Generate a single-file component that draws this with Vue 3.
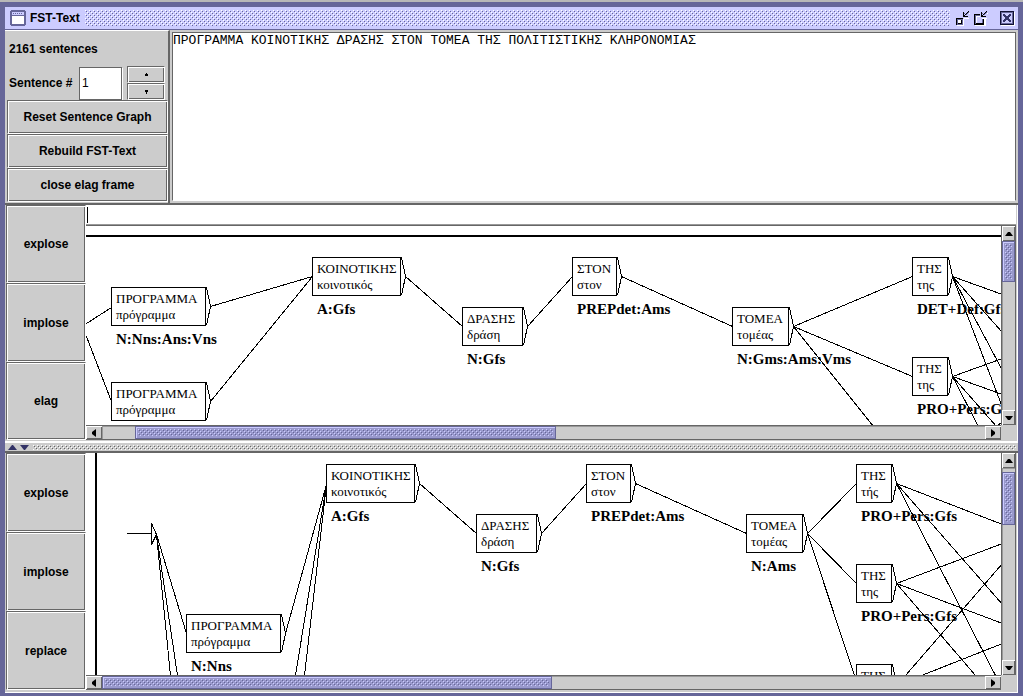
<script setup>
import { ref } from 'vue'

const sentence = ref('ΠΡΟΓΡΑΜΜΑ ΚΟΙΝΟΤΙΚΗΣ ΔΡΑΣΗΣ ΣΤΟΝ ΤΟΜΕΑ ΤΗΣ ΠΟΛΙΤΙΣΤΙΚΗΣ ΚΛΗΡΟΝΟΜΙΑΣ')
const sentenceNumber = ref('1')
const formula = ref('')

// Each node: [x, y, box width, inflected form, lemma, tags]
// Each edge: [x1, y1, x2, y2]
const panes = [
  {
    id: 'source',
    actions: ['explose', 'implose', 'elag'],
    rule: [0, 10, 4000, 10],
    hThumb: [33, 421, 429],
    vThumb: [0, 41, 127],
    nodes: [
      [25, 61, 94, 'ΠΡΟΓΡΑΜΜΑ', 'πρόγραμμα', 'N:Nns:Ans:Vns'],
      [25, 156, 94, 'ΠΡΟΓΡΑΜΜΑ', 'πρόγραμμα', ''],
      [226, 31, 88, 'ΚΟΙΝΟΤΙΚΗΣ', 'κοινοτικός', 'A:Gfs'],
      [376, 81, 60, 'ΔΡΑΣΗΣ', 'δράση', 'N:Gfs'],
      [486, 31, 44, 'ΣΤΟΝ', 'στον', 'PREPdet:Ams'],
      [646, 81, 56, 'ΤΟΜΕΑ', 'τομέας', 'N:Gms:Ams:Vms'],
      [826, 31, 35, 'ΤΗΣ', 'της', 'DET+Def:Gfs'],
      [826, 131, 35, 'ΤΗΣ', 'της', 'PRO+Pers:Gfs'],
    ],
    edges: [
      [0, 97, 25, 81], [0, 110, 25, 175],
      [124, 80, 226, 50], [124, 175, 226, 50],
      [319, 50, 376, 100], [441, 100, 486, 50], [535, 50, 646, 100],
      [707, 100, 826, 50], [707, 100, 826, 150], [707, 100, 787, 200],
      [866, 50, 916, 68], [866, 50, 916, 106], [866, 50, 916, 144], [866, 50, 916, 181],
      [866, 150, 916, 132], [866, 150, 916, 168], [866, 150, 910, 200], [866, 150, 892, 200],
      [910, 200, 916, 195],
    ],
  },
  {
    id: 'result',
    actions: ['explose', 'implose', 'replace'],
    rule: [10, 0, 10, 4000],
    hThumb: [0, 450, 433],
    vThumb: [4, 52, 134],
    start: true,
    nodes: [
      [100, 161, 94, 'ΠΡΟΓΡΑΜΜΑ', 'πρόγραμμα', 'N:Nns'],
      [240, 11, 88, 'ΚΟΙΝΟΤΙΚΗΣ', 'κοινοτικός', 'A:Gfs'],
      [390, 61, 60, 'ΔΡΑΣΗΣ', 'δράση', 'N:Gfs'],
      [500, 11, 44, 'ΣΤΟΝ', 'στον', 'PREPdet:Ams'],
      [660, 61, 56, 'ΤΟΜΕΑ', 'τομέας', 'N:Ams'],
      [770, 11, 35, 'ΤΗΣ', 'τής', 'PRO+Pers:Gfs'],
      [770, 111, 35, 'ΤΗΣ', 'της', 'PRO+Pers:Gfs'],
      [770, 211, 35, 'ΤΗΣ', 'της', ''],
    ],
    edges: [
      [70, 81, 100, 180], [70, 81, 91, 222], [70, 81, 84, 222],
      [199, 180, 240, 31], [209, 222, 240, 31], [218, 222, 240, 31],
      [333, 30, 390, 80], [455, 80, 500, 30], [549, 30, 660, 80],
      [721, 80, 770, 30], [721, 80, 770, 130], [721, 80, 768, 222],
      [810, 30, 916, 71], [810, 30, 916, 151], [810, 30, 909, 222],
      [810, 130, 916, 90], [810, 130, 916, 170], [810, 130, 889, 222],
      [819, 222, 916, 110], [835, 222, 916, 190],
    ],
  },
]

const tracks = (parts) => parts.map((n) => `${n}fr`).join(' ')
const chevron = ([x, y, w]) => `M${x + w + 1} ${y} L${x + w + 5} ${y + 19} L${x + w + 1} ${y + 38}`
</script>

<template>
  <main class="frame">
    <svg class="defs" aria-hidden="true">
      <defs>
        <pattern id="bumps-title" width="4" height="4" patternUnits="userSpaceOnUse">
          <path d="M0 0h1v1H0zM2 2h1v1H2z" fill="#fff" />
          <path d="M1 1h1v1H1zM3 3h1v1H3z" fill="#666699" />
        </pattern>
        <pattern id="bumps-thumb" width="4" height="4" patternUnits="userSpaceOnUse">
          <path d="M0 0h1v1H0zM2 2h1v1H2z" fill="#ccccff" />
          <path d="M1 1h1v1H1zM3 3h1v1H3z" fill="#666699" />
        </pattern>
        <pattern id="bumps-split" width="4" height="4" patternUnits="userSpaceOnUse">
          <path d="M0 0h1v1H0zM2 2h1v1H2z" fill="#fff" />
          <path d="M1 1h1v1H1zM3 3h1v1H3z" fill="#666" />
        </pattern>
      </defs>
    </svg>

    <header class="titlebar">
      <svg class="app-icon" width="16" height="16" shape-rendering="crispEdges" aria-hidden="true">
        <path d="M1 0h14v1h1v14h-1v1H1v-1H0V1h1z" fill="#666699" />
        <path d="M2 6h12v8H2z" fill="#fff" />
        <path d="M2 2h12v3H2z" fill="#ccccff" />
        <path d="M3 3h1v1H3zM5 3h1v1H5zM7 3h1v1H7zM9 3h1v1H9zM11 3h1v1h-1z" fill="#666699" />
      </svg>
      <h1>FST-Text</h1>
      <svg class="bumps" aria-hidden="true"><rect width="100%" height="100%" fill="url(#bumps-title)" /></svg>
      <div class="win-buttons">
        <button type="button" aria-label="Minimize">
          <svg width="15" height="15" shape-rendering="crispEdges">
            <path d="M1 8h7v7H1z" fill="#fff" />
            <path d="M0 7h7v7H0z" fill="#666699" />
            <path d="M0 7h7v1H1v6H0zM5 9h1v4H2v-1h3z" fill="#000" />
            <path d="M2 9h3v3H2z" fill="#fff" />
            <path d="M8 7h5v1H8zM13 2h1v1h-1z" fill="#fff" />
            <path d="M7 1h1v3h1V3h1V2h1V1h1V0h1v1h-1v1h-1v1h-1v1h-1v1h3v1H7z" fill="#000" />
            <path d="M8 2h1v1H8zM12 1h1v1h-1zM11 2h1v1h-1zM10 3h1v1h-1z" fill="#666699" />
          </svg>
        </button>
        <button type="button" aria-label="Restore">
          <svg width="15" height="15" shape-rendering="crispEdges">
            <path d="M1 4h5v2H3v7h7V8h2v7H1z" fill="#fff" />
            <path d="M0 3h6v2H2v7h6V8h2v6H0z" fill="#666699" />
            <path d="M0 3h6v1H1v10H0zM2 12h7V8h1v6H1v-1h1z" fill="#000" />
            <path d="M8 7h5v1H8zM13 2h1v1h-1z" fill="#fff" />
            <path d="M7 1h1v3h1V3h1V2h1V1h1V0h1v1h-1v1h-1v1h-1v1h-1v1h3v1H7z" fill="#000" />
            <path d="M8 2h1v1H8zM12 1h1v1h-1zM11 2h1v1h-1zM10 3h1v1h-1z" fill="#666699" />
          </svg>
        </button>
        <button type="button" class="close" aria-label="Close">
          <svg width="15" height="15" shape-rendering="crispEdges">
            <path d="M1 1h14v14H1z" fill="#fff" />
            <path d="M0 0h14v14H0z" fill="#111133" />
            <path d="M1 1h12v12H1z" fill="#666699" />
            <path d="M2 2h10v10H2z" fill="#ccccff" />
            <path d="M3 3h2v1h1v1h2V4h1V3h2v2h-1v1H9v2h1v1h1v2H9v-1H8V9H6v1H5v1H3V9h1V8h1V6H4V5H3z" fill="#333366" />
          </svg>
        </button>
      </div>
    </header>

    <section class="top">
      <div class="controls">
        <p class="count">2161 sentences</p>
        <div class="number-row">
          <label for="sentence-number">Sentence #</label>
          <input id="sentence-number" v-model="sentenceNumber" type="text" />
          <div class="spinner">
            <button type="button" aria-label="Next sentence">
              <svg width="5" height="4" shape-rendering="crispEdges"><path d="M2 0h1v1h1v2H1V1h1z" /></svg>
            </button>
            <button type="button" aria-label="Previous sentence">
              <svg width="5" height="4" shape-rendering="crispEdges"><path d="M1 0h3v2H3v2H2V2H1z" /></svg>
            </button>
          </div>
        </div>
        <button type="button">Reset Sentence Graph</button>
        <button type="button">Rebuild FST-Text</button>
        <button type="button">close elag frame</button>
      </div>
      <div class="text-holder">
        <textarea v-model="sentence" aria-label="Sentence text" spellcheck="false"></textarea>
      </div>
    </section>

    <template v-for="(pane, index) in panes" :key="pane.id">
      <div v-if="index === 1" class="splitter">
        <svg width="22" height="5" aria-hidden="true">
          <path d="M0 5L4 0h1l4 5z" fill="#333366" />
          <path d="M12 0h9l-4 5h-1z" fill="#333366" />
        </svg>
        <svg class="bumps" aria-hidden="true"><rect width="100%" height="100%" fill="url(#bumps-split)" /></svg>
      </div>
      <section class="pane" :class="pane.id">
        <div class="actions">
          <button v-for="action in pane.actions" :key="action" type="button">{{ action }}</button>
        </div>
        <div class="work">
          <input v-if="index === 0" v-model="formula" class="formula" type="text" aria-label="Formula" />
          <div class="scroller">
            <svg class="graph" role="img" :aria-label="`${pane.id} sentence graph`">
              <line
                class="rule" :x1="pane.rule[0]" :y1="pane.rule[1]"
                :x2="pane.rule[2]" :y2="pane.rule[3]"
              />
              <g class="ink">
                <path v-if="pane.start" d="M40 80H65M65 70L70 81L65 91Z" />
                <line v-for="(e, i) in pane.edges" :key="i" :x1="e[0]" :y1="e[1]" :x2="e[2]" :y2="e[3]" />
                <g v-for="(n, i) in pane.nodes" :key="i">
                  <rect :x="n[0]" :y="n[1]" :width="n[2]" height="38" />
                  <path :d="chevron(n)" />
                </g>
              </g>
              <g v-for="(n, i) in pane.nodes" :key="i">
                <text :x="n[0] + 5" :y="n[1] + 16">{{ n[3] }}</text>
                <text :x="n[0] + 5" :y="n[1] + 32">{{ n[4] }}</text>
                <text v-if="n[5]" class="tags" :x="n[0] + 5" :y="n[1] + 57">{{ n[5] }}</text>
              </g>
            </svg>
            <div class="vbar">
              <button type="button" aria-label="Scroll up">
                <svg width="8" height="4"><path d="M0 4L3 0h2l3 4z" /></svg>
              </button>
              <div class="track" :style="{ gridTemplateRows: tracks(pane.vThumb) }">
                <span></span>
                <div class="thumb"><svg class="bumps"><rect width="100%" height="100%" fill="url(#bumps-thumb)" /></svg></div>
              </div>
              <button type="button" aria-label="Scroll down">
                <svg width="8" height="4"><path d="M0 0h8L5 4H3z" /></svg>
              </button>
            </div>
            <div class="hbar">
              <button type="button" aria-label="Scroll left">
                <svg width="4" height="8"><path d="M4 0v8L0 5V3z" /></svg>
              </button>
              <div class="track" :style="{ gridTemplateColumns: tracks(pane.hThumb) }">
                <span></span>
                <div class="thumb"><svg class="bumps"><rect width="100%" height="100%" fill="url(#bumps-thumb)" /></svg></div>
              </div>
              <button type="button" aria-label="Scroll right">
                <svg width="4" height="8"><path d="M0 0l4 3v2L0 8z" /></svg>
              </button>
            </div>
          </div>
        </div>
      </section>
    </template>
  </main>
</template>

<style>
html,
body,
#app {
  height: 100%;
}
</style>

<style scoped>
* {
  box-sizing: border-box;
}

.frame {
  display: flex;
  flex-direction: column;
  height: 100%;
  min-height: 600px;
  padding: 5px 5px 3px;
  border-top: 2px solid #b8b8b8;
  background: #666699;
  color: #000;
  font: bold 12px "Liberation Sans", Arial, sans-serif;
}

.defs {
  position: absolute;
  width: 0;
  height: 0;
}

button {
  display: flex;
  align-items: center;
  justify-content: center;
  margin: 0;
  padding: 0;
  border: 1px solid;
  border-color: #666 #fff #fff #666;
  border-radius: 0;
  background: #ccc;
  box-shadow: inset 1px 1px #fff, inset -1px -1px #666;
  color: #000;
  font: inherit;
}

svg {
  display: block;
}

.titlebar {
  display: flex;
  align-items: center;
  height: 23px;
  flex: none;
  padding: 0 3px 0 5px;
  border-bottom: 1px solid #666699;
  background: #ccccff;
}

.titlebar h1 {
  margin: 0 5px 0 4px;
  font-size: 12px;
}

.titlebar .bumps {
  flex: 1;
  height: 16px;
}

.win-buttons {
  display: flex;
  gap: 3px;
  padding-left: 6px;
}

.win-buttons button {
  width: 15px;
  height: 15px;
  border: 0;
  background: none;
  box-shadow: none;
}

.win-buttons .close {
  margin-left: 8px;
}

.top {
  display: flex;
  flex: none;
  height: 175px;
  background: #ccc;
  border-bottom: 2px solid #666;
}

.controls {
  display: flex;
  flex-direction: column;
  width: 165px;
  padding: 1px 0 1px 2px;
  border: solid;
  border-width: 1px 2px 0 0;
  border-color: #fff #666 #fff #fff;
}

.controls > button {
  flex: 1;
}

.count {
  margin: 0;
  padding-left: 2px;
  line-height: 34px;
}

.number-row {
  display: flex;
  align-items: center;
  height: 34px;
  padding: 0 3px 0 2px;
}

.number-row label {
  flex: 1;
}

.number-row input {
  width: 43px;
  height: 33px;
  padding: 0 2px;
  border: 1px solid #666;
  background: #fff;
  box-shadow: 1px 1px #fff;
  font: 12px "Liberation Sans", Arial, sans-serif;
}

.spinner {
  display: flex;
  flex-direction: column;
  width: 38px;
  height: 34px;
  margin-left: 5px;
}

.spinner button {
  flex: 1;
}

.text-holder {
  flex: 1;
  min-width: 0;
  padding: 2px;
}

textarea {
  display: block;
  width: 100%;
  height: 100%;
  padding: 0;
  border: 1px solid;
  border-color: #666 #666 #fff #666;
  border-radius: 0;
  outline: 0;
  background: #fff;
  resize: none;
  color: #000;
  font: 13px/16px "Liberation Mono", "Courier New", monospace;
}

.pane {
  display: flex;
  min-height: 0;
  padding: 0 1px;
  background: #ccc;
  border-right: 1px solid #fff;
}

.pane.source {
  flex: 237 1 0;
  padding-bottom: 1px;
}

.pane.result {
  flex: 239 1 0;
  padding-bottom: 2px;
  border-bottom: 1px solid #fff;
}

.actions {
  display: flex;
  flex-direction: column;
  flex: none;
  width: 80px;
}

.actions button {
  flex: 1;
}

.work {
  display: flex;
  flex-direction: column;
  flex: 1;
  min-width: 0;
}

/* The gradient is the idle text caret. */
.formula {
  flex: none;
  width: 100%;
  height: 20px;
  padding: 0 1px;
  border: 0;
  border-bottom: 1px solid #999;
  outline: 0;
  background: linear-gradient(#000, #000) 1px 2px / 1px 16px no-repeat #fff;
  font: 12px "Liberation Sans", Arial, sans-serif;
}

.scroller {
  display: grid;
  grid-template: minmax(0, 1fr) 15px / minmax(0, 1fr) 15px;
  flex: 1;
  min-height: 0;
  background: #ccc;
}

.source .scroller {
  border-top: 1px solid #666;
}

.graph {
  width: 100%;
  height: 100%;
  overflow: hidden;
  background: #fff;
}

.rule {
  stroke: #000;
  stroke-width: 2;
}

.ink {
  fill: none;
  stroke: #000;
  shape-rendering: crispEdges;
  transform: translate(0.5px, 0.5px);
}

.ink rect {
  fill: #fff;
}

.graph text {
  font: 13px "Liberation Serif", "Times New Roman", serif;
}

.graph .tags {
  font-size: 15px;
  font-weight: bold;
}

.vbar,
.hbar {
  display: flex;
  background: #ccc;
}

.vbar {
  flex-direction: column;
  border-left: 1px solid #666;
  border-right: 1px solid #666;
}

.hbar {
  border-top: 1px solid #666;
  border-bottom: 1px solid #666;
}

.vbar button,
.hbar button {
  flex: none;
  border: 0;
}

.vbar button {
  height: 15px;
}

.hbar button {
  width: 16px;
}

.track {
  display: grid;
  flex: 1;
  min-width: 0;
  min-height: 0;
  box-shadow: inset 1px 1px #999;
}

.thumb {
  min-width: 0;
  min-height: 0;
  padding: 2px;
  border: 1px solid #666699;
  background: #9999cc;
  box-shadow: inset 1px 1px #ccccff;
}

.thumb .bumps {
  width: 100%;
  height: 100%;
}

.splitter {
  display: flex;
  flex: none;
  align-items: center;
  gap: 3px;
  height: 12px;
  padding: 0 2px 0 3px;
  border-top: 2px solid #fff;
  border-bottom: 2px solid #666;
  background: #ccc;
}

.splitter .bumps {
  flex: 1;
  height: 5px;
}
</style>
